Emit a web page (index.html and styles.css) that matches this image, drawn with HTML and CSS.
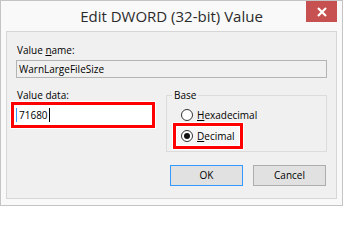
FILE: index.html
```html
<!DOCTYPE html>
<html>
<head>
<meta charset="utf-8">
<link rel="stylesheet" href="styles.css">
</head>
<body>
<div class="window">
  <div class="titlebar">
    <div class="title">Edit DWORD (32-bit) Value</div>
    <div class="close">
      <svg width="10" height="10" viewBox="0 0 10 10"><path d="M1 1 L9 9 M9 1 L1 9" stroke="#fff" stroke-width="2.2" fill="none"/></svg>
    </div>
  </div>
  <div class="panel">
    <div class="label">Value <u>n</u>ame:</div>
    <div class="field readonly">WarnLargeFileSize</div>
    <div class="row">
      <div class="left">
        <div class="label">Value data:</div>
        <div class="mark data">
          <span class="focus-line"></span><span class="value">71680</span><span class="caret"></span>
        </div>
      </div>
      <fieldset class="group">
        <legend>Base</legend>
        <div class="radio-row hex"><span class="radio"></span><span><u>H</u>exadecimal</span></div>
        <div class="mark dec"><span class="radio checked"></span><span><u>D</u>ecimal</span></div>
      </fieldset>
    </div>
    <div class="buttons">
      <div class="btn default">OK</div>
      <div class="btn">Cancel</div>
    </div>
  </div>
</div>
</body>
</html>
```
FILE: styles.css
```css
html, body {
  margin: 0;
  padding: 0;
  background: #ffffff;
}
body {
  font-family: "Open Sans", "Noto Sans", sans-serif;
  font-size: 10px;
  color: #000;
}
.window {
  box-sizing: border-box;
  width: 343px;
  height: 206px;
  border: 1px solid #c4c4c4;
  background: #f9f9f9;
}
.titlebar {
  height: 30px;
  display: grid;
  grid-template-columns: 1fr auto 1fr;
}
.title {
  grid-column: 2;
  margin-top: 5px;
  font-size: 15px;
  line-height: 20px;
  color: #2b2b2b;
  white-space: nowrap;
}
.close {
  grid-column: 3;
  justify-self: end;
  align-self: start;
  margin-right: 5px;
  width: 31px;
  height: 21px;
  background: #c75050;
  display: flex;
  align-items: center;
  justify-content: center;
}
.close svg { display: block; }
.panel {
  box-sizing: border-box;
  height: 168px;
  margin: 0 5px;
  border: 1px solid #d6d6d6;
  background: #f0f0f0;
  padding: 11px 9px 0 9px;
}
.label {
  line-height: 15px;
  padding-left: 1px;
  white-space: nowrap;
}
.field {
  box-sizing: border-box;
  margin-top: 2px;
  height: 18px;
  line-height: 16px;
  border: 1px solid #b4b4b4;
  padding-left: 2px;
}
.readonly { background: #f0f0f0; }
.row {
  display: flex;
  margin-top: 10px;
}
.left {
  width: 150px;
}
.mark {
  box-sizing: border-box;
  border: 3px solid #f00;
  box-shadow: 0 0 0 1px #fff, inset 0 0 0 1px #fff;
}
.data {
  margin-top: -1px;
  margin-left: -5px;
  width: 144px;
  height: 26px;
  background: #fff;
  display: flex;
  align-items: center;
  padding-left: 2px;
}
.focus-line {
  width: 1px;
  height: 14px;
  background: #3399ff;
}
.value {
  margin-left: 2px;
  line-height: 14px;
}
.caret {
  width: 1px;
  height: 14px;
  background: #000;
  margin-left: 1px;
}
.group {
  box-sizing: border-box;
  width: 161px;
  height: 64px;
  margin: 0;
  padding: 0 0 2px 0;
  border: 1px solid #dcdcdc;
  min-width: 0;
}
.group legend {
  margin-left: 5px;
  padding: 0 2px;
  line-height: 15px;
}
.radio-row {
  display: flex;
  align-items: center;
  height: 14px;
  margin-top: 5px;
  padding-left: 14px;
}
.radio {
  box-sizing: border-box;
  width: 12px;
  height: 12px;
  border: 1px solid #333;
  border-radius: 50%;
  background: #fff;
  margin-right: 4px;
  display: flex;
  align-items: center;
  justify-content: center;
  flex: none;
}
.radio.checked::after {
  content: "";
  width: 6px;
  height: 6px;
  border-radius: 50%;
  background: #111;
}
.dec {
  margin-top: 1px;
  margin-left: 6px;
  width: 70px;
  height: 26px;
  display: flex;
  align-items: center;
  padding-left: 5px;
  background: #f6f6f6;
  line-height: 14px;
}
.buttons {
  display: flex;
  justify-content: flex-end;
  gap: 10px;
  margin-top: 13px;
  margin-right: 1px;
}
.btn {
  box-sizing: border-box;
  width: 73px;
  height: 21px;
  border: 1px solid #adadad;
  background: #e1e1e1;
  text-align: center;
  line-height: 19px;
}
.btn.default {
  border-color: #3399ff;
}
```
